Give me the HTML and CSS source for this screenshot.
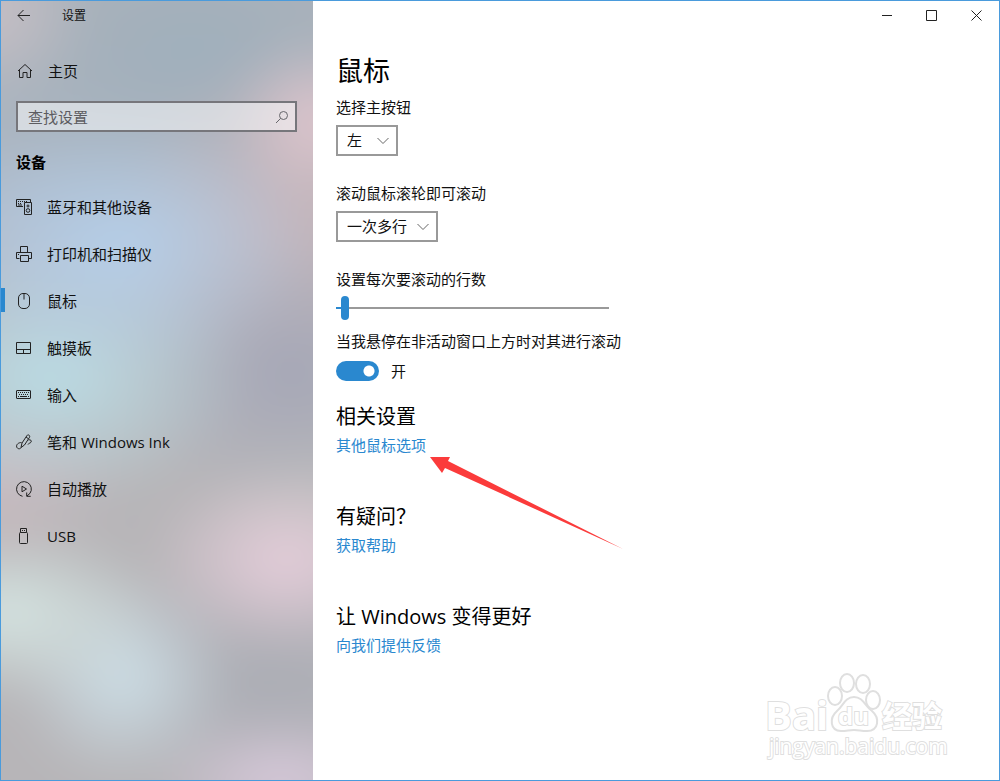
FILE: index.html
```html
<!DOCTYPE html>
<html lang="zh-CN">
<head>
    <meta charset="UTF-8">
    <meta name="viewport" content="width=device-width, initial-scale=1.0">
    <title>设置</title>
    <link rel="stylesheet" href="styles.css">
</head>
<body>
    <div class="window">
        <aside class="sidebar">
            <div class="title-row">
                <button class="back" type="button" aria-label="返回">
                    <svg class="icon" width="14" height="14" viewBox="0 0 14 14"><path d="M13 6.500H1M6.500 1L1 6.500 6.500 12"/></svg>
                </button>
                <span class="app-title">设置</span>
            </div>

            <a class="home" href="#">
                <svg class="icon" width="16" height="16" viewBox="0 0 16 16"><path d="M1 8L8 1.500 15 8M2.500 7V14.500h3.500V9.500h4v5h3.500V7"/></svg>
                <span>主页</span>
            </a>

            <div class="search">
                <input type="text" class="search-input" placeholder="查找设置" aria-label="查找设置">
                <svg class="icon search-icon" width="14" height="14" viewBox="0 0 14 14"><circle cx="8.500" cy="5.500" r="4"/><path d="M5.600 8.400L1 13"/></svg>
            </div>

            <h2 class="group-title">设备</h2>

            <nav class="nav">
                <a class="nav-item" href="#">
                    <svg class="icon" width="16" height="16" viewBox="0 0 16 16"><path d="M7 7.500H.5v-7h14V3M2 2.500h1M4 2.500h1M6 2.500h1M8 2.500h1M10 2.500h1M2 4.500h1M4 4.500h1M2 6h4M8.500 3.500h7v12h-7z"/><circle cx="12" cy="7" r="1"/><circle cx="12" cy="11.500" r="1.800"/></svg>
                    <span>蓝牙和其他设备</span>
                </a>
                <a class="nav-item" href="#">
                    <svg class="icon" width="16" height="16" viewBox="0 0 16 16"><path d="M4.500 6.500v-6h7v6M3.500 12.500h-3v-6h15v6h-3M4.500 9.500h8v6h-8zM2 8.500h1"/></svg>
                    <span>打印机和扫描仪</span>
                </a>
                <a class="nav-item active" href="#">
                    <svg class="icon" width="16" height="16" viewBox="0 0 16 16"><rect x="2.500" y=".5" width="11" height="15" rx="4.500"/><path d="M8 .5v6"/></svg>
                    <span>鼠标</span>
                </a>
                <a class="nav-item" href="#">
                    <svg class="icon" width="16" height="16" viewBox="0 0 16 16"><path d="M.5 2.500h14v11H.5zM.5 9.500h14M7.500 9.500v4"/></svg>
                    <span>触摸板</span>
                </a>
                <a class="nav-item" href="#">
                    <svg class="icon" width="16" height="16" viewBox="0 0 16 16"><rect x=".5" y="3.500" width="14" height="8" rx=".5"/><path d="M2 5.500h11" stroke-dasharray="1 1"/><path d="M3 7.500h10" stroke-dasharray="1 1"/><path d="M2 9.500h1M4 9.500h7M12 9.500h1"/></svg>
                    <span>输入</span>
                </a>
                <a class="nav-item" href="#">
                    <svg class="icon" width="16" height="16" viewBox="0 0 16 16"><path d="M5 13.500L6 9l5-7.500c1-1.500 3.500 0 2.500 1.800L8.500 11 5 13.500M10 3l2.500 1.800M5.500 8.500C2.500 8.500 0 10.500.7 13c.6 2 3.800 2.500 4.300.5M12.500 6c2-.8 3.500.8 2.500 2.200-.7 1-2.500 1-3 2.300"/></svg>
                    <span>笔和 Windows Ink</span>
                </a>
                <a class="nav-item" href="#">
                    <svg class="icon" width="16" height="16" viewBox="0 0 16 16"><path d="M6.500 15.300A7.400 7.400 0 1 1 14 12.300L11 15M6 5.200v5.600L10.500 8zM10.700 11.500v3.800h4"/></svg>
                    <span>自动播放</span>
                </a>
                <a class="nav-item" href="#">
                    <svg class="icon" width="16" height="16" viewBox="0 0 16 16"><path d="M4.500 4.500v-4h6v4M6 2.500h1M8 2.500h1"/><rect x="3.500" y="4.500" width="8" height="11" rx="1"/></svg>
                    <span>USB</span>
                </a>
            </nav>
        </aside>

        <main class="content">
            <div class="window-buttons">
                <button type="button" aria-label="最小化"><svg class="icon" width="11" height="11" viewBox="0 0 11 11"><path d="M1 5.500h10"/></svg></button>
                <button type="button" aria-label="最大化"><svg class="icon" width="11" height="11" viewBox="0 0 11 11"><path d="M.5 .5h10v10H.5z"/></svg></button>
                <button type="button" aria-label="关闭"><svg class="icon" width="11" height="11" viewBox="0 0 11 11"><path d="M.5 .5l10 10M10.500 .5l-10 10"/></svg></button>
            </div>

            <div class="settings">
                <h1>鼠标</h1>

                <div class="field">
                    <label for="primaryButton">选择主按钮</label>
                    <div class="select-box">
                        <select id="primaryButton">
                            <option>左</option>
                        </select>
                        <svg class="chevron" width="12" height="8" viewBox="0 0 12 8"><path d="M.5 1L6 6.500 11.500 1"/></svg>
                    </div>
                </div>

                <div class="field">
                    <label for="wheelMode">滚动鼠标滚轮即可滚动</label>
                    <div class="select-box">
                        <select id="wheelMode">
                            <option>一次多行</option>
                        </select>
                        <svg class="chevron" width="12" height="8" viewBox="0 0 12 8"><path d="M.5 1L6 6.500 11.500 1"/></svg>
                    </div>
                </div>

                <div class="field slider-field">
                    <label for="lineCount">设置每次要滚动的行数</label>
                    <input type="range" id="lineCount" class="slider" min="1" max="100" value="3">
                </div>

                <div class="field toggle-field">
                    <label for="inactiveScroll">当我悬停在非活动窗口上方时对其进行滚动</label>
                    <div class="toggle-row">
                        <input type="checkbox" id="inactiveScroll" class="toggle" role="switch" checked>
                        <span>开</span>
                    </div>
                </div>

                <section class="related">
                    <h2>相关设置</h2>
                    <a href="#">其他鼠标选项</a>
                </section>
                <section class="related">
                    <h2>有疑问？</h2>
                    <a href="#">获取帮助</a>
                </section>
                <section class="related">
                    <h2>让 Windows 变得更好</h2>
                    <a href="#">向我们提供反馈</a>
                </section>
            </div>

            <svg class="arrow" width="194" height="94" viewBox="0 0 194 94"><path d="M0 1H20L18 5 193 93 15 12 12 17z"/></svg>

            <svg class="watermark" width="192" height="92" viewBox="0 0 192 92">
                <ellipse cx="75" cy="25" rx="7" ry="9"/>
                <ellipse cx="87" cy="12" rx="7" ry="9"/>
                <ellipse cx="103" cy="13" rx="7" ry="9"/>
                <ellipse cx="113" cy="29" rx="7" ry="9"/>
                <path d="M94 26c-9 0-11 9-17 14-8 7-7 20 4 20 6 0 8-1 13-1s7 1 13 1c12 0 13-13 5-20-7-5-9-14-18-14z"/>
                <text class="wm-logo" x="5" y="59">Bai</text>
                <text class="wm-du" x="78" y="54">du</text>
                <text class="wm-cn" x="122" y="56">经验</text>
                <text class="wm-url" x="9" y="83">jingyan.baidu.com</text>
            </svg>
        </main>
    </div>
</body>
</html>
```
FILE: styles.css
```css
* {
    box-sizing: border-box;
}
body {
    margin: 0;
    font-family: "Open Sans", "Noto Sans CJK SC", sans-serif;
    font-size: 15px;
    line-height: 20px;
    color: #111;
}
h1, h2 {
    margin: 0;
    font-weight: 400;
    color: #000;
}
a {
    color: inherit;
    text-decoration: none;
}
button {
    display: flex;
    align-items: center;
    justify-content: center;
    padding: 0;
    border: none;
    background: none;
}
.icon {
    flex: none;
    fill: none;
    stroke: #222;
    stroke-width: 1;
}
.window {
    display: flex;
    min-height: 100vh;
    border: 1px solid #4a9bdc;
    background: #fff;
}

/* left pane */
.sidebar {
    flex: none;
    width: 312px;
    position: relative;
    isolation: isolate;
    overflow: hidden;
}
/* blurred wallpaper behind the menu */
.sidebar::before {
    content: "";
    position: absolute;
    inset: -60px;
    z-index: -1;
    filter: blur(20px);
    background:
        radial-gradient(ellipse 100px 90px at 50px 70px, #c8c0c6, transparent),
        radial-gradient(ellipse 90px 85px at 375px 180px, #e0c6ce, transparent),
        radial-gradient(ellipse 200px 130px at 180px 305px, #b5cfea, transparent),
        radial-gradient(ellipse 200px 130px at 110px 435px, #bbdde6, transparent),
        radial-gradient(ellipse 130px 90px at 50px 540px, #cab9be, transparent),
        radial-gradient(ellipse 140px 95px at 345px 620px, #e6cedb, transparent),
        radial-gradient(ellipse 150px 90px at 70px 672px, #d6e6e3, transparent),
        radial-gradient(ellipse 110px 105px at 182px 737px, #cddfe7, transparent),
        radial-gradient(ellipse 130px 70px at 340px 840px, #d9cadc, transparent),
        radial-gradient(ellipse 180px 140px at 350px 430px, #a5a7b7, transparent),
        radial-gradient(ellipse 180px 170px at 350px 280px, #c6b5bb, transparent),
        radial-gradient(ellipse 120px 90px at 370px 550px, #bebfbd, transparent),
        radial-gradient(ellipse 380px 220px at 250px 110px, #9fafbc, transparent),
        radial-gradient(ellipse 280px 160px at 90px 250px, #b0bbca, transparent),
        radial-gradient(ellipse 200px 130px at 330px 740px, #abadb5, transparent),
        #b7b5b8;
}
.title-row {
    display: flex;
    align-items: center;
    gap: 24px;
    height: 30px;
    padding-left: 9px;
}
.back {
    width: 28px;
    height: 28px;
}
.app-title {
    font-size: 12px;
}
.home {
    display: flex;
    align-items: center;
    gap: 15px;
    height: 40px;
    margin-top: 20px;
    padding-left: 16px;
}
.search {
    position: relative;
    margin: 10px 16px 0 15px;
}
.search-input {
    display: block;
    width: 100%;
    height: 31px;
    padding: 0 32px 0 10px;
    border: 2px solid #76767b;
    background: rgba(255, 255, 255, 0.5);
    font: inherit;
}
.search-input::placeholder {
    color: #5c5c60;
}
.search-icon {
    position: absolute;
    right: 8px;
    top: 9px;
    stroke: #66666b;
}
.group-title {
    margin: 20px 0 11px 15px;
    font-size: 15px;
    font-weight: 700;
}
.nav-item {
    display: flex;
    align-items: center;
    gap: 15px;
    height: 47px;
    padding-left: 15px;
    position: relative;
}
.nav-item.active::before {
    content: "";
    position: absolute;
    left: 0;
    top: 11px;
    width: 4px;
    height: 24px;
    background: #2a88cf;
}

/* right pane */
.content {
    flex: 1;
    min-width: 0;
    position: relative;
}
.window-buttons {
    display: flex;
    justify-content: flex-end;
    height: 29px;
}
.window-buttons button {
    width: 45px;
}
.settings {
    padding: 23px;
}
h1 {
    margin-bottom: 8px;
    font-size: 27px;
    line-height: 36px;
}
.field {
    margin-bottom: 27px;
}
.field label {
    display: block;
    margin-bottom: 8px;
}
.select-box {
    display: inline-block;
    position: relative;
    vertical-align: top;
}
.select-box select {
    display: block;
    appearance: none;
    min-width: 62px;
    height: 31px;
    padding: 0 28px 2px 9px;
    border: 2px solid #999;
    border-radius: 0;
    background: #fff;
    color: #111;
    font: inherit;
}
.chevron {
    position: absolute;
    right: 9px;
    top: 12px;
    fill: none;
    stroke: #666;
    pointer-events: none;
}
.slider-field {
    margin-bottom: 11px;
}
.slider-field label {
    margin-bottom: 7px;
}
.slider {
    display: block;
    appearance: none;
    width: 100%;
    max-width: 273px;
    height: 24px;
    margin: 0;
    background: none;
}
.slider::-webkit-slider-runnable-track {
    height: 2px;
    background: linear-gradient(to right, #2a88cf 8px, #999 8px);
}
.slider::-webkit-slider-thumb {
    appearance: none;
    width: 8px;
    height: 24px;
    margin-top: -11px;
    border-radius: 4px;
    background: #2a88cf;
}
.toggle-field {
    margin-bottom: 22px;
}
.toggle-row {
    display: flex;
    align-items: center;
    gap: 12px;
    padding-top: 2px;
}
.toggle {
    appearance: none;
    width: 43px;
    height: 20px;
    margin: 0;
    border-radius: 10px;
    background: radial-gradient(circle at 33px 10px, #fff 5px, #2a88cf 6px);
}
.related {
    margin-bottom: 48px;
}
.related h2 {
    margin-bottom: 4px;
    font-size: 20px;
    line-height: 28px;
}
.related a {
    color: #2a88cf;
}

/* pointer and watermark lie over the page */
.arrow {
    position: absolute;
    left: 117px;
    top: 455px;
    fill: #fb3b3b;
}
.watermark {
    position: absolute;
    right: 47px;
    bottom: 17px;
    fill: #fff;
    stroke: #dfdfdf;
    stroke-width: 2;
    font-family: "Open Sans", "Noto Sans CJK SC", sans-serif;
    font-weight: 700;
}
.watermark text {
    paint-order: stroke;
}
.wm-logo {
    font-size: 40px;
}
.wm-du {
    font-size: 24px;
}
.wm-cn {
    font-size: 30px;
}
.wm-url {
    font-size: 21px;
    font-weight: 400;
}
```
